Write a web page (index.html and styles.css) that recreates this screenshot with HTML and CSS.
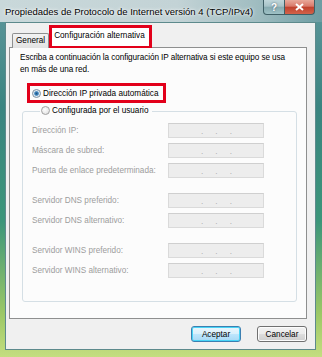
FILE: index.html
```html
<!DOCTYPE html>
<html>
<head>
	<meta charset="utf-8">
	<link rel="stylesheet" href="styles.css">
</head>
<body>

<div class="window">
	<div class="titlebar">
		<span class="title">Propiedades de Protocolo de Internet versión 4 (TCP/IPv4)</span>
		<div class="caption-buttons">
			<span class="cap help">?</span>
			<span class="cap close">
				<svg width="9" height="8" viewBox="0 0 9 8"><path d="M1 1 L8 7 M8 1 L1 7" stroke="#fff" stroke-width="2" fill="none"/></svg>
			</span>
		</div>
	</div>

	<div class="client">
		<div class="tabs">
			<span class="tab">General</span>
			<span class="tab active">Configuración alternativa</span>
		</div>

		<div class="panel">
			<p class="intro">Escriba a continuación la configuración IP alternativa si este equipo se usa en más de una red.</p>

			<div class="option marked">
				<span class="radio checked"></span>Dirección IP privada automática
			</div>

			<fieldset class="group">
				<legend><span class="radio"></span>Configurada por el usuario</legend>

				<div class="row"><span class="label">Dirección IP:</span><span class="ip"><i>.</i><i>.</i><i>.</i></span></div>
				<div class="row"><span class="label">Máscara de subred:</span><span class="ip"><i>.</i><i>.</i><i>.</i></span></div>
				<div class="row"><span class="label">Puerta de enlace predeterminada:</span><span class="ip"><i>.</i><i>.</i><i>.</i></span></div>

				<div class="row spaced"><span class="label">Servidor DNS preferido:</span><span class="ip"><i>.</i><i>.</i><i>.</i></span></div>
				<div class="row"><span class="label">Servidor DNS alternativo:</span><span class="ip"><i>.</i><i>.</i><i>.</i></span></div>

				<div class="row spaced"><span class="label">Servidor WINS preferido:</span><span class="ip"><i>.</i><i>.</i><i>.</i></span></div>
				<div class="row"><span class="label">Servidor WINS alternativo:</span><span class="ip"><i>.</i><i>.</i><i>.</i></span></div>
			</fieldset>
		</div>

		<div class="actions">
			<button class="btn default">Aceptar</button>
			<button class="btn">Cancelar</button>
		</div>
	</div>
</div>

</body>
</html>
```

FILE: styles.css
```css
body {margin: 0px;}

.window {
	width: 322px;
	height: 357px;
	box-sizing: border-box;
	display: flex;
	flex-direction: column;
	padding: 0 6px 7px 5px;
	background: linear-gradient(180deg, #5f979c 0%, #3a8480 30%, #3c967a 62%, #9cc866 88%, #c4de80 100%);
	font-family: "Liberation Sans", Arial, sans-serif;
	font-size: 8.2px;
	color: #000;
}

/* title bar */
.titlebar {
	height: 22px;
	display: flex;
	margin: 0 -6px 0 -5px;
	padding: 0 7px 0 5px;
	background: linear-gradient(90deg, #c9d8da 0%, #c3d3d6 55%, #9fbcc0 80%, #6d9da3 100%);
}

.title {
	font-size: 9.5px;
	line-height: 24px;
	white-space: nowrap;
	text-shadow: 0 0 4px #fff, 0 0 2px #fff;
}

.caption-buttons {
	margin-left: auto;
	display: flex;
	height: 15px;
}

.cap {
	display: flex;
	align-items: center;
	justify-content: center;
	height: 15px;
	box-sizing: border-box;
	border: 1px solid #3f5f66;
	border-top: none;
	color: #fff;
	font-weight: bold;
	font-size: 10px;
}

.cap.help {
	width: 22px;
	border-radius: 0 0 0 4px;
	background: linear-gradient(180deg, #c0d6da 0%, #a7c3c8 45%, #86aab0 50%, #9fc2c6 100%);
	text-shadow: 0 0 2px #456;
}

.cap.close {
	width: 30px;
	border-left: none;
	border-radius: 0 0 4px 0;
	background: linear-gradient(180deg, #e8a89a 0%, #d9796a 45%, #c0402c 50%, #d2634a 100%);
}

/* client area */
.client {
	flex: 1;
	display: flex;
	flex-direction: column;
	background: #f0f0f0;
	border: 1px solid #5d8a8c;
	padding: 2px 8px 0 3px;
}

.tabs {
	display: flex;
	align-items: flex-end;
	padding-left: 3px;
	height: 23px;
	position: relative;
	z-index: 1;
	margin-bottom: -1px;
}

.tab {
	height: 15px;
	line-height: 14px;
	box-sizing: border-box;
	padding: 0 3px;
	border: 1px solid #8e8f8f;
	border-bottom: none;
	border-radius: 2px 2px 0 0;
	background: linear-gradient(180deg, #f3f3f3, #e2e2e2);
}

.tab.active {
	height: 23px;
	line-height: 16px;
	padding: 0 4px 0 2px;
	border: 3px solid #e2001a;
	border-bottom-width: 2px;
	border-radius: 0;
	background: #fff;
}

.panel {
	background: #fcfcfc;
	border: 1px solid #8e8f8f;
	padding: 4px 10px 16px 10px;
}

.intro {
	margin: 0;
	line-height: 12px;
	letter-spacing: -0.08px;
}

.option {
	display: flex;
	align-items: center;
	margin: 7px 0 0 7px;
	width: 139px;
	height: 20px;
	box-sizing: border-box;
	padding-left: 2px;
}

.option.marked {
	border: 3px solid #e2001a;
}

.radio {
	display: inline-block;
	width: 9px;
	height: 9px;
	box-sizing: border-box;
	border-radius: 50%;
	border: 1px solid #a0a0a0;
	background: radial-gradient(circle at 40% 40%, #fdfdfd, #dcdcdc);
	margin-right: 2px;
	vertical-align: middle;
}

.radio.checked {
	background: radial-gradient(circle, #1c5380 0, #3f86c0 1.8px, #d8e6f0 2.8px, #f4f4f4 4px);
	border-color: #7a8fa0;
}

.group {
	margin: 2px 0 0 2px;
	width: 275px;
	box-sizing: border-box;
	border: 1px solid #d5dfe5;
	border-radius: 3px;
	padding: 6px 0 23px 9px;
	min-width: 0;
}

.group legend {
	margin-left: 8px;
	padding: 0 3px 0 1px;
	line-height: 12px;
}

.row {
	display: flex;
	align-items: center;
	height: 15px;
	margin-top: 5px;
	color: #9c9c9c;
}

.row:first-of-type {
	margin-top: 0;
}

.row.spaced {
	margin-top: 15px;
}

.label {
	width: 136px;
	white-space: nowrap;
}

.ip {
	width: 96px;
	height: 15px;
	box-sizing: border-box;
	border: 1px solid #dadada;
	border-top-color: #cfcfcf;
	background: #ededed;
	display: flex;
	justify-content: space-evenly;
	padding: 0 19px 0 20px;
	color: #b0b0b0;
	line-height: 15px;
}

.ip i {
	font-style: normal;
}

/* buttons */
.actions {
	display: flex;
	justify-content: flex-end;
	gap: 16px;
	margin-top: 7px;
}

.btn {
	width: 50px;
	height: 16px;
	padding: 0;
	font-family: inherit;
	font-size: 8.2px;
	color: #000;
	border: 1px solid #707070;
	border-radius: 3px;
	background: linear-gradient(180deg, #f2f2f2 0%, #ebebeb 50%, #dddddd 51%, #cfcfcf 100%);
	box-shadow: inset 0 0 0 1px #fcfcfc;
}

.btn.default {
	border-color: #3c7fb1;
	box-shadow: inset 0 0 0 1px #48d4f6;
	background: linear-gradient(180deg, #eaf6fd 0%, #d9f0fc 50%, #bee6fd 51%, #a7d9f5 100%);
}
```
